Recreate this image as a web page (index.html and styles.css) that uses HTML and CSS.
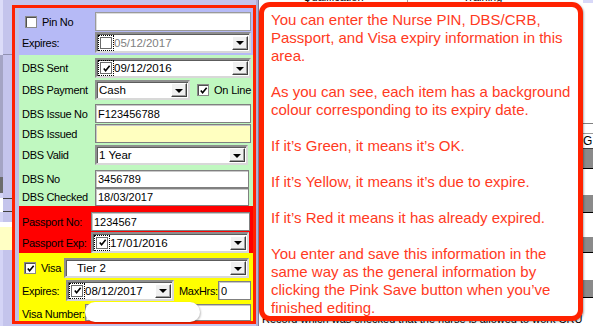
FILE: index.html
```html
<!DOCTYPE html>
<html lang="en">
<head>
    <meta charset="UTF-8">
    <title>Nurse Details – Expiry Information</title>
    <link rel="stylesheet" href="styles.css">
</head>
<body>
    <div class="screen">
        <!-- bit of the nurse list peeking out on the left -->
        <div class="side-strip">
            <div class="strip strip-top"></div>
            <div class="strip strip-list"></div>
            <div class="strip strip-dark"></div>
            <div class="strip strip-space"></div>
            <div class="strip strip-field"></div>
            <div class="strip strip-space2"></div>
            <div class="strip strip-white"></div>
            <div class="strip strip-yellow"></div>
            <div class="strip strip-rest"></div>
        </div>

        <div class="expiry-panel">
            <div class="sec sec-pin">
                <div class="row row-pin">
                    <div class="lbl lbl-chk"><span class="chk"></span>Pin No</div>
                    <div class="txt"></div>
                </div>
                <div class="row row-pin-exp">
                    <div class="lbl">Expires:</div>
                    <div class="pick">
                        <span class="pick-chk"></span>
                        <span class="pick-val off">05/12/2017</span>
                        <span class="drop"></span>
                    </div>
                </div>
            </div>

            <div class="sec sec-dbs">
                <div class="row row-sent">
                    <div class="lbl">DBS Sent</div>
                    <div class="pick">
                        <span class="pick-chk"><svg viewBox="0 0 10 10"><polyline points="2,5 4,7.5 8.5,2"/></svg></span>
                        <span class="pick-val">09/12/2016</span>
                        <span class="drop"></span>
                    </div>
                </div>
                <div class="row row-pay">
                    <div class="lbl">DBS Payment</div>
                    <div class="combo combo-pay">
                        <span class="combo-val">Cash</span>
                        <span class="drop"></span>
                    </div>
                    <span class="chk chk-online"><svg viewBox="0 0 10 10"><polyline points="2,5 4,7.5 8.5,2"/></svg></span>
                    <span class="online">On Line</span>
                </div>
                <div class="row row-issue">
                    <div class="lbl">DBS Issue No</div>
                    <div class="txt">F123456788</div>
                </div>
                <div class="row row-issued">
                    <div class="lbl">DBS Issued</div>
                    <div class="txt txt-warn"></div>
                </div>
                <div class="row row-valid">
                    <div class="lbl">DBS Valid</div>
                    <div class="combo combo-valid">
                        <span class="combo-val">1 Year</span>
                        <span class="drop"></span>
                    </div>
                </div>
                <div class="row row-no">
                    <div class="lbl">DBS No</div>
                    <div class="txt txt-slim">3456789</div>
                </div>
                <div class="row row-checked">
                    <div class="lbl">DBS Checked</div>
                    <div class="txt txt-slim">18/03/2017</div>
                </div>
            </div>

            <div class="sec sec-pass">
                <div class="row row-pass-no">
                    <div class="lbl lbl-pass">Passport No:</div>
                    <div class="txt txt-pass">1234567</div>
                </div>
                <div class="row row-pass-exp">
                    <div class="lbl lbl-pass">Passport Exp:</div>
                    <div class="pick pick-pass">
                        <span class="pick-chk"><svg viewBox="0 0 10 10"><polyline points="2,5 4,7.5 8.5,2"/></svg></span>
                        <span class="pick-val">17/01/2016</span>
                        <span class="drop"></span>
                    </div>
                </div>
            </div>

            <div class="sec sec-visa">
                <div class="row row-visa">
                    <div class="lbl lbl-chk lbl-visa"><span class="chk"><svg viewBox="0 0 10 10"><polyline points="2,5 4,7.5 8.5,2"/></svg></span>Visa</div>
                    <div class="combo combo-visa">
                        <span class="combo-val">Tier 2</span>
                        <span class="drop"></span>
                    </div>
                </div>
                <div class="row row-visa-exp">
                    <div class="lbl lbl-visa-exp">Expires:</div>
                    <div class="pick pick-visa">
                        <span class="pick-chk"><svg viewBox="0 0 10 10"><polyline points="2,5 4,7.5 8.5,2"/></svg></span>
                        <span class="pick-val">08/12/2017</span>
                        <span class="drop"></span>
                    </div>
                    <div class="lbl lbl-max">MaxHrs:</div>
                    <div class="txt txt-max">0</div>
                </div>
                <div class="row row-visa-num">
                    <div class="lbl lbl-num">Visa Number:</div>
                    <div class="txt txt-num"></div>
                    <div class="blot"></div>
                </div>
            </div>
        </div>

        <div class="workspace">
            <div class="gap-line"></div>
            <div class="grid-area">
                <div class="grid-head">
                    <span class="head-cell head-qual">Qualification</span>
                    <span class="head-cell head-train">Training</span>
                </div>
                <div class="band band-top"></div>
                <div class="band band-line"></div>
                <div class="band band-gap"></div>
                <div class="band band-g"><span class="g-pad"></span><span>G</span></div>
                <div class="band shade b1"></div>
                <div class="band plain b2"></div>
                <div class="band shade b3"></div>
                <div class="band plain b4"></div>
                <div class="band shade b5"></div>
                <div class="band plain b6"></div>
                <div class="band shade b7"></div>
                <div class="band plain b8"></div>
                <div class="grid-foot">Record which was checked that the nurse is allowed to work CRU</div>
            </div>

            <div class="callout">
                <p>You can enter the Nurse PIN, DBS/CRB, Passport, and Visa expiry information in this area.</p>
                <p>As you can see, each item has a background colour corresponding to its expiry date.</p>
                <p>If it’s Green, it means it’s OK.</p>
                <p>If it’s Yellow, it means it’s due to expire.</p>
                <p>If it’s Red it means it has already expired.</p>
                <p>You enter and save this information in the same way as the general information by clicking the Pink Save button when you’ve finished editing.</p>
            </div>
        </div>
    </div>
</body>
</html>
```

FILE: styles.css
```css
* {
    margin: 0;
    padding: 0;
    box-sizing: border-box;
}

html, body {
    width: 593px;
    height: 326px;
    overflow: hidden;
}

body {
    font-family: "Liberation Sans", Arial, sans-serif;
    font-size: 11px;
    color: #000;
    background: #c4c4ec;
}

.screen {
    display: flex;
    height: 326px;
}

/* left strip */
.side-strip {
    width: 12px;
    display: flex;
    flex-direction: column;
}

.strip {
    background: #c4c4ec;
    border-left: 3px solid #d4d4f6;
}

.strip-top {
    height: 55px;
    border-left-color: #dcdcf8;
    box-shadow: inset 0 -1px 0 #9090b0;
}

.strip-list {
    height: 122px;
    border-left-color: #a4a4c4;
}

.strip-dark {
    height: 16px;
    border-left-color: #6c6c6c;
}

.strip-space {
    height: 5px;
}

.strip-field {
    height: 14px;
    border-left: 3px solid #fff;
    box-shadow: inset 0 1px 0 #404040, inset 0 -1px 0 #404040;
}

.strip-space2 {
    height: 10px;
}

.strip-white {
    height: 5px;
    background: #fff;
    border-left-color: #fff;
}

.strip-yellow {
    height: 23px;
    background: #ffffc4;
    border-left-color: #ffffc4;
}

.strip-rest {
    flex: 1;
}

/* expiry panel */
.expiry-panel {
    width: 244px;
    height: 319px;
    margin-top: 5px;
    border: 3px solid #ff2200;
    background: #c0c0e4;
    padding-left: 4px;
    display: flex;
    flex-direction: column;
}

.sec {
    width: 234px;
}

.sec-pin {
    height: 47px;
    background: #b6baf6;
    padding-top: 4px;
}

.sec-dbs {
    height: 151px;
    background: #c0f8c0;
    padding-top: 3px;
}

.sec-pass {
    height: 47px;
    background: #ff0000;
    padding-top: 6px;
}

.sec-visa {
    height: 68px;
    background: #ffff00;
    padding-top: 5px;
}

.row {
    display: flex;
    align-items: center;
    position: relative;
}

.lbl {
    width: 76px;
    padding-left: 3px;
    letter-spacing: -0.3px;
    white-space: nowrap;
}

.lbl-chk {
    display: flex;
    align-items: center;
}

.row-pin { height: 19px; }
.row-pin-exp { height: 21px; margin-top: 1px; }
.row-sent { height: 20px; }
.row-pay { height: 20px; margin-top: 2px; }
.row-issue { height: 19px; margin-top: 4px; }
.row-issued { height: 19px; margin-top: 1px; }
.row-valid { height: 20px; margin-top: 2px; }
.row-no { height: 18px; margin-top: 5px; }
.row-checked { height: 18px; }
.row-pass-no { height: 19px; }
.row-pass-exp { height: 21px; margin-top: 1px; }
.row-visa { height: 20px; }
.row-visa-exp { height: 21px; margin-top: 2px; }
.row-visa-num { height: 17px; margin-top: 3px; align-items: flex-start; }

/* checkbox */
.chk {
    width: 12px;
    height: 12px;
    background: #fff;
    border: 1px solid #8a8a8a;
    box-shadow: inset 1px 1px 0 #505050;
    display: inline-flex;
    align-items: center;
    justify-content: center;
    flex-shrink: 0;
}

.chk svg, .pick-chk svg {
    width: 9px;
    height: 9px;
}

.chk polyline, .pick-chk polyline {
    fill: none;
    stroke: #000;
    stroke-width: 1.8;
}

.row-pin .chk {
    margin: 0 5px 0 3px;
}

.lbl-visa {
    width: 45px;
}

.lbl-visa .chk {
    margin: 0 5px 0 2px;
}

/* edit boxes */
.txt {
    width: 156px;
    height: 100%;
    background: #fff;
    border: 1px solid #808080;
    box-shadow: inset 1px 1px 0 #c8c8c8;
    padding: 0 2px;
    display: flex;
    align-items: center;
    white-space: nowrap;
}

.row-pin .txt {
    border-color: #9a9a9a;
    box-shadow: inset 1px 1px 0 #dcdcdc;
}

.txt-warn {
    background: #ffffc0;
}

.txt-slim {
    width: 154px;
}

.lbl-pass {
    width: 72px;
}

.txt-pass {
    width: 159px;
}

.lbl-visa-exp {
    width: 47px;
}

.lbl-max {
    width: 39px;
    margin-left: 5px;
    padding-left: 0;
}

.txt-max {
    width: 33px;
    height: 19px;
}

.lbl-num {
    width: 66px;
    line-height: 20px;
}

.txt-num {
    width: 166px;
}

/* date pickers and combos */
.pick, .combo {
    width: 156px;
    height: 100%;
    background: #fff;
    border: 2px solid;
    border-color: #8e8e8e #d8d8d8 #d8d8d8 #8e8e8e;
    box-shadow: inset 1px 1px 0 #5c5c5c;
    display: flex;
    align-items: center;
    white-space: nowrap;
}

.pick-pass {
    width: 158px;
}

.pick-visa {
    width: 108px;
}

.pick-chk {
    width: 12px;
    height: 12px;
    margin: 0 2px 0 3px;
    border: 1px solid #6a6a6a;
    outline: 1px dotted #000;
    outline-offset: 1px;
    display: inline-flex;
    align-items: center;
    justify-content: center;
}

.pick-val {
    font-size: 11.5px;
}

.pick-val.off {
    color: #808080;
}

.combo-val {
    padding-left: 2px;
    font-size: 11.5px;
}

.combo-pay {
    width: 95px;
}

.combo-valid {
    width: 153px;
}

.combo-visa {
    width: 185px;
}

.combo-visa .combo-val {
    padding-left: 11px;
}

.drop {
    width: 16px;
    height: 14px;
    margin-left: auto;
    margin-right: 1px;
    background: #f0f0f0;
    border: 1px solid;
    border-color: #fff #404040 #404040 #fff;
    box-shadow: inset -1px -1px 0 #a0a0a0;
    display: flex;
    align-items: center;
    justify-content: center;
}

.drop::after {
    content: "";
    border-left: 4px solid transparent;
    border-right: 4px solid transparent;
    border-top: 4px solid #000;
    margin-top: 1px;
}

.chk-online {
    margin-left: 7px;
}

.online {
    margin-left: 5px;
    letter-spacing: -0.2px;
}

.blot {
    position: absolute;
    left: 66px;
    top: -2px;
    width: 115px;
    height: 20px;
    border-radius: 10px;
    background: #fff;
    box-shadow: 1px 1px 2px rgba(0, 0, 0, 0.25);
}

/* background grid on the right */
.workspace {
    flex: 1;
    position: relative;
    display: flex;
}

.gap-line {
    width: 3px;
    background: #b0b0d8;
    border-right: 1px solid #7c7c9c;
}

.grid-area {
    flex: 1;
    display: flex;
    flex-direction: column;
    background: #fff;
}

.grid-head {
    height: 3px;
    overflow: hidden;
    display: flex;
    background: #fff;
    box-shadow: inset -10px 0 0 #d8d8f8;
}

.head-cell {
    margin-top: -9px;
    font-size: 11px;
    line-height: 12px;
}

.head-qual {
    margin-left: 44px;
    width: 105px;
    border-right: 1px solid #a0a0a0;
}

.head-train {
    margin-left: 55px;
}

.band {
    background: #fff;
}

.band-top { height: 123px; }
.band-line { height: 1px; background: #808080; }
.band-gap { height: 10px; }

.band-g {
    height: 16px;
    display: flex;
    align-items: center;
    border-top: 1px solid #9a9a9a;
    border-bottom: 1px solid #404040;
    font-size: 12px;
}

.g-pad {
    width: 324px;
}

.shade {
    background: #8a8a8a;
}

.plain {
    border-top: 1px solid #000;
}

.b1 { height: 19px; }
.b2 { height: 28px; }
.b3 { height: 17px; }
.b4 { height: 26px; }
.b5 { height: 15px; }
.b6 { height: 29px; }
.b7 { height: 18px; }
.b8 { height: 15px; }

.grid-foot {
    padding-left: 3px;
    font-size: 11px;
    line-height: 14px;
    white-space: nowrap;
}

/* help callout */
.callout {
    position: absolute;
    left: 3px;
    top: 2px;
    width: 324px;
    height: 319px;
    background: #fff;
    border: 5px solid #ff2200;
    border-radius: 11px;
    box-shadow: 1px 1px 2px rgba(0, 0, 0, 0.3);
    padding: 4px 0 0 7px;
    color: #ff3a1e;
    font-size: 15px;
    line-height: 18px;
}

.callout p + p {
    margin-top: 18px;
}
```
